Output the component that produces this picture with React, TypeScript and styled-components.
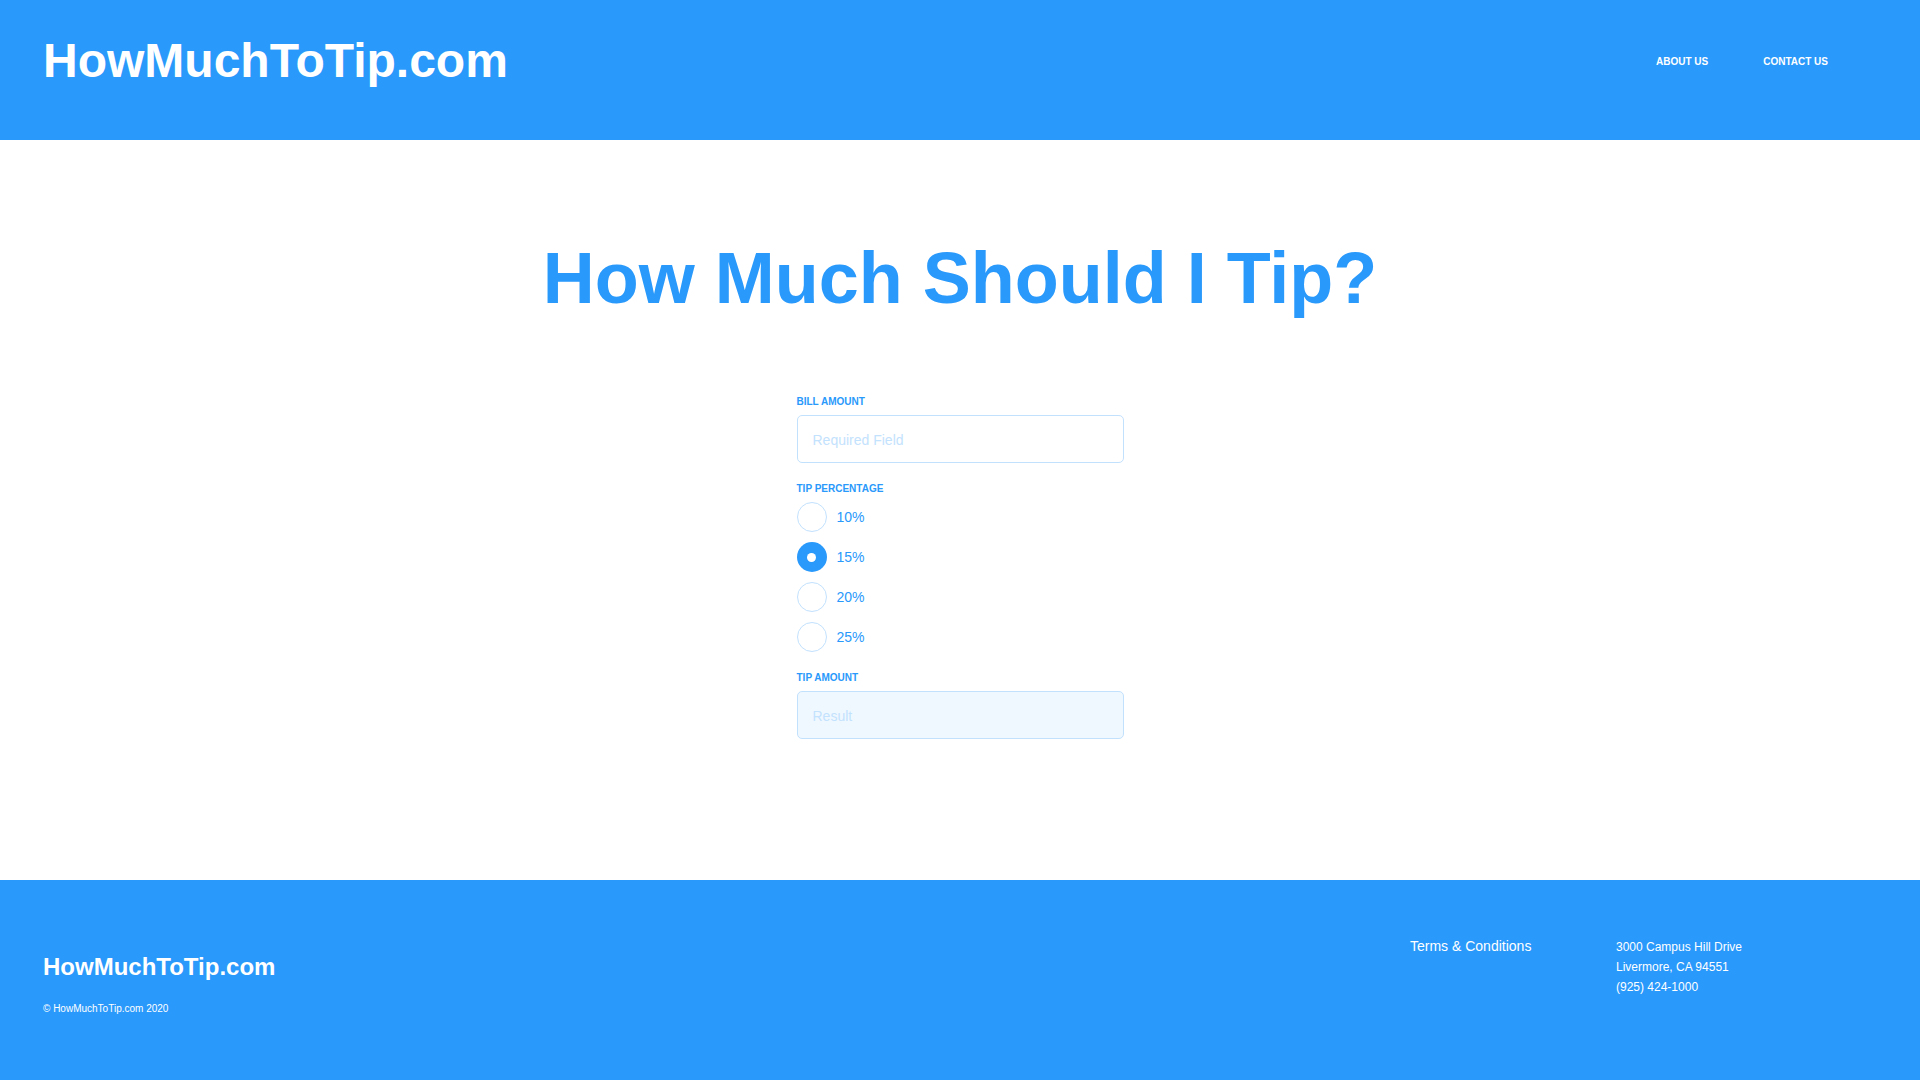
import React, { useState } from "react";
import styled, { createGlobalStyle } from "styled-components";

const BLUE = "#2999fb";
const LIGHT = "#c2e1fd";

const GlobalStyle = createGlobalStyle`
  * { box-sizing: border-box; }
  html, body { margin: 0; padding: 0; background: #ffffff; }
  body { font-family: "Liberation Sans", Arial, Helvetica, sans-serif; }
  input::placeholder { color: #c3e2fd; opacity: 1; }
`;

const Page = styled.div`
  display: flex;
  flex-direction: column;
  min-height: 100vh;
`;

const Header = styled.header`
  height: 140px;
  background: ${BLUE};
  display: flex;
  align-items: center;
  justify-content: space-between;
  padding: 0 92px 20px 43px;
`;

const Logo = styled.a<{ $size: number }>`
  color: #ffffff;
  font-weight: 700;
  font-size: ${(p) => p.$size}px;
  line-height: ${(p) => Math.round(p.$size * 1.15)}px;
  text-decoration: none;
  white-space: nowrap;
`;

const Nav = styled.nav`
  display: flex;
  gap: 55px;
  padding-top: 3px;
`;

const NavLink = styled.a`
  color: #ffffff;
  font-size: 10px;
  line-height: 12px;
  font-weight: 700;
  text-transform: uppercase;
  text-decoration: none;
`;

const Main = styled.main`
  min-height: 740px;
  display: flex;
  flex-direction: column;
  align-items: center;
  padding-top: 95px;
`;

const Title = styled.h1`
  margin: 0;
  color: ${BLUE};
  font-size: 72px;
  line-height: 86px;
  font-weight: 700;
  text-align: center;
`;

const Form = styled.form`
  width: 327px;
  margin-top: 75px;
  display: flex;
  flex-direction: column;
`;

const FieldLabel = styled.label<{ $top?: number }>`
  display: block;
  color: ${BLUE};
  font-size: 10px;
  line-height: 12px;
  font-weight: 700;
  text-transform: uppercase;
  margin-top: ${(p) => p.$top ?? 0}px;
`;

const TextInput = styled.input<{ $result?: boolean }>`
  width: 100%;
  height: 48px;
  margin-top: 7px;
  border: 1px solid ${LIGHT};
  border-radius: 5px;
  padding: 1px 15px 0;
  font-family: inherit;
  font-size: 14px;
  color: ${BLUE};
  background: ${(p) => (p.$result ? "#f0f8ff" : "#ffffff")};
  outline: none;
`;

const RadioList = styled.div`
  display: flex;
  flex-direction: column;
  gap: 10px;
  margin-top: 7px;
`;

const RadioRow = styled.label`
  display: flex;
  align-items: center;
  height: 30px;
  cursor: pointer;
  color: ${BLUE};
  font-size: 14px;
  line-height: 16px;
`;

const RadioInput = styled.input`
  appearance: none;
  -webkit-appearance: none;
  margin: 0;
  width: 30px;
  height: 30px;
  border-radius: 50%;
  border: 1px solid ${LIGHT};
  background: #ffffff;
  position: relative;
  cursor: pointer;
  flex: none;

  &:checked {
    border: none;
    background: ${BLUE};
  }
  &:checked::after {
    content: "";
    position: absolute;
    left: 50%;
    top: 50%;
    width: 9px;
    height: 9px;
    margin: -4.5px 0 0 -4.5px;
    border-radius: 50%;
    background: #ffffff;
  }
`;

const RadioText = styled.span`
  margin-left: 10px;
`;

const Footer = styled.footer`
  height: 200px;
  background: ${BLUE};
  display: grid;
  grid-template-columns: 1fr 206px 304px;
  padding: 57px 0 0 43px;
  color: #ffffff;
`;

const Brand = styled.div`
  padding-top: 16px;
`;

const FooterLogo = styled(Logo)`
  display: block;
  line-height: 28px;
`;

const Copy = styled.div`
  margin-top: 22px;
  font-size: 10px;
  line-height: 12px;
`;

const FooterLink = styled.a`
  color: #ffffff;
  font-size: 14px;
  line-height: 16px;
  text-decoration: none;
  padding-top: 1px;
`;

const Address = styled.address`
  font-style: normal;
  font-size: 12px;
  line-height: 20px;
`;

const TIPS = [10, 15, 20, 25];

export default function App() {
  const [tip, setTip] = useState(15);
  const [bill, setBill] = useState("");
  const amount = parseFloat(bill);
  const result = !isNaN(amount) ? ((amount * tip) / 100).toFixed(2) : "";

  return (
    <Page>
      <GlobalStyle />
      <Header>
        <Logo $size={48} href="#">HowMuchToTip.com</Logo>
        <Nav>
          <NavLink href="#">About Us</NavLink>
          <NavLink href="#">Contact Us</NavLink>
        </Nav>
      </Header>
      <Main>
        <Title>How Much Should I Tip?</Title>
        <Form onSubmit={(e) => e.preventDefault()}>
          <FieldLabel htmlFor="bill">Bill Amount</FieldLabel>
          <TextInput
            id="bill"
            placeholder="Required Field"
            value={bill}
            onChange={(e) => setBill(e.target.value)}
          />
          <FieldLabel $top={20}>Tip Percentage</FieldLabel>
          <RadioList>
            {TIPS.map((t) => (
              <RadioRow key={t}>
                <RadioInput
                  type="radio"
                  name="tip"
                  checked={tip === t}
                  onChange={() => setTip(t)}
                />
                <RadioText>{t}%</RadioText>
              </RadioRow>
            ))}
          </RadioList>
          <FieldLabel $top={20} htmlFor="result">Tip Amount</FieldLabel>
          <TextInput id="result" $result readOnly placeholder="Result" value={result} />
        </Form>
      </Main>
      <Footer>
        <Brand>
          <FooterLogo $size={24} href="#">HowMuchToTip.com</FooterLogo>
          <Copy>© HowMuchToTip.com 2020</Copy>
        </Brand>
        <div>
          <FooterLink href="#">Terms &amp; Conditions</FooterLink>
        </div>
        <Address>
          3000 Campus Hill Drive
          <br />
          Livermore, CA 94551
          <br />
          (925) 424-1000
        </Address>
      </Footer>
    </Page>
  );
}
